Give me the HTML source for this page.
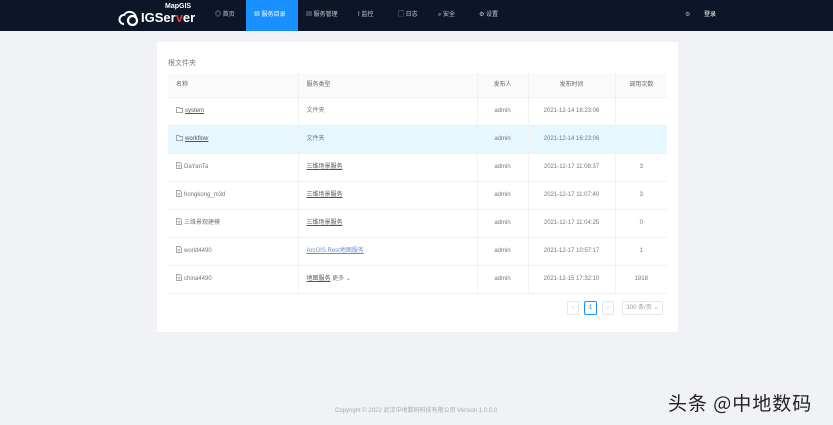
<!DOCTYPE html>
<html><head><meta charset="utf-8"><style>
*{margin:0;padding:0;box-sizing:border-box}
body{width:833px;height:425px;background:#f0f2f5;font-family:"Liberation Sans","Noto Sans CJK SC",sans-serif;position:relative;overflow:hidden;color:#666;font-size:6px}
.nav{position:absolute;left:0;top:0;width:833px;height:31px;background:#0c1628}
.logo{position:absolute;left:118px;top:0;width:90px;height:31px;color:#fff}
.logo .big{position:absolute;left:23px;top:10px;font-size:13px;font-weight:bold;line-height:16px}
.logo .small{position:absolute;left:47px;top:2px;font-size:7px;font-weight:bold;line-height:9px}
.ni{position:absolute;top:0;height:31px;line-height:31px;color:#c8ccd4;font-size:6px}
.act{background:#1890ff;color:#fff;padding:0 8px}
.card{position:absolute;left:157px;top:42px;width:521px;height:290px;background:#fff}
.title{position:absolute;left:11px;top:16px;font-size:7px;color:#777}
table{position:absolute;left:11px;top:31px;width:499px;border-collapse:collapse;table-layout:fixed}
td,th{height:28px;line-height:10px;vertical-align:middle;border-bottom:1px solid #eef0f2;font-weight:normal;font-size:6px;color:#777;text-align:left;padding:0 0 0 8px;white-space:nowrap}
th{height:24px;background:#fafafa;color:#666}
td+td,th+th{border-left:1px solid #f2f2f2}
.c{text-align:center;padding-left:0}
tr.hl td{background:#e6f7ff}
u{color:#555}
svg.i{vertical-align:-1px;margin-right:2px}
.foot{position:absolute;left:335px;top:405px;font-size:6px;color:#aaa}
.wm{position:absolute;left:668px;top:389px;font-size:19px;letter-spacing:1px;color:#222;font-family:"Noto Sans CJK SC",sans-serif}
.pg{position:absolute;top:259px;height:14px;border:1px solid #e5e5e5;border-radius:2px;font-size:6px;text-align:center;line-height:12px;color:#bbb;background:#fff}
</style></head><body>
<div class="nav">
 <div class="logo">
  <svg width="22" height="18" viewBox="0 0 22 18" style="position:absolute;left:0;top:9px"><path d="M6 15a4.5 4.5 0 0 1 0-9a6.5 6.5 0 0 1 12 2.5" fill="none" stroke="#fff" stroke-width="2"/><circle cx="14.5" cy="11.5" r="4.5" fill="none" stroke="#fff" stroke-width="2.2"/></svg>
  <span class="small">MapGIS</span><span class="big">IGSer<span style="color:#e03a3a">v</span>er</span>
 </div>
 <div class="ni" style="left:215px">◎ 首页</div>
 <div class="ni act" style="left:246px;width:52px">▦ 服务目录</div>
 <div class="ni" style="left:306px">▤ 服务管理</div>
 <div class="ni" style="left:358px">ⅼ 监控</div>
 <div class="ni" style="left:398px">▢ 日志</div>
 <div class="ni" style="left:438px">⌕ 安全</div>
 <div class="ni" style="left:479px">⚙ 设置</div>
 <div class="ni" style="left:685px;color:#aab">⚙</div>
 <div class="ni" style="left:704px;color:#fff">登录</div>
</div>
<div class="card">
 <div class="title">根文件夹</div>
 <table>
  <colgroup><col style="width:130px"><col style="width:179px"><col style="width:51px"><col style="width:87px"><col></colgroup>
  <tr><th>名称</th><th>服务类型</th><th class="c">发布人</th><th class="c">发布时间</th><th class="c">调用次数</th></tr>
  <tr><td><svg class="i" width="7" height="6" viewBox="0 0 7 6"><path d="M.5 .5h2.5l.7 1h2.8v4h-6z" fill="none" stroke="#888" stroke-width=".7"/></svg><u>system</u></td><td>文件夹</td><td class="c">admin</td><td class="c">2021-12-14 16:23:06</td><td></td></tr>
  <tr class="hl"><td><svg class="i" width="7" height="6" viewBox="0 0 7 6"><path d="M.5 .5h2.5l.7 1h2.8v4h-6z" fill="none" stroke="#888" stroke-width=".7"/></svg><u>workflow</u></td><td>文件夹</td><td class="c">admin</td><td class="c">2021-12-14 16:23:06</td><td></td></tr>
  <tr><td><svg class="i" width="6" height="7" viewBox="0 0 6 7"><path d="M.5 .5h3.5l1.5 1.5v4.5h-5zM1.8 3.3h2.4M1.8 4.8h2.4" fill="none" stroke="#888" stroke-width=".7"/></svg>DaYanTa</td><td><u>三维场景服务</u></td><td class="c">admin</td><td class="c">2021-12-17 11:08:37</td><td class="c">3</td></tr>
  <tr><td><svg class="i" width="6" height="7" viewBox="0 0 6 7"><path d="M.5 .5h3.5l1.5 1.5v4.5h-5zM1.8 3.3h2.4M1.8 4.8h2.4" fill="none" stroke="#888" stroke-width=".7"/></svg>hongkong_m3d</td><td><u>三维场景服务</u></td><td class="c">admin</td><td class="c">2021-12-17 11:07:40</td><td class="c">3</td></tr>
  <tr><td><svg class="i" width="6" height="7" viewBox="0 0 6 7"><path d="M.5 .5h3.5l1.5 1.5v4.5h-5zM1.8 3.3h2.4M1.8 4.8h2.4" fill="none" stroke="#888" stroke-width=".7"/></svg>三维景观建模</td><td><u>三维场景服务</u></td><td class="c">admin</td><td class="c">2021-12-17 11:04:25</td><td class="c">0</td></tr>
  <tr><td><svg class="i" width="6" height="7" viewBox="0 0 6 7"><path d="M.5 .5h3.5l1.5 1.5v4.5h-5zM1.8 3.3h2.4M1.8 4.8h2.4" fill="none" stroke="#888" stroke-width=".7"/></svg>world4490</td><td><u style="color:#6a8fbf">ArcGIS Rest地图服务</u></td><td class="c">admin</td><td class="c">2021-12-17 10:57:17</td><td class="c">1</td></tr>
  <tr><td><svg class="i" width="6" height="7" viewBox="0 0 6 7"><path d="M.5 .5h3.5l1.5 1.5v4.5h-5zM1.8 3.3h2.4M1.8 4.8h2.4" fill="none" stroke="#888" stroke-width=".7"/></svg>china4490</td><td><u>地图服务</u> 更多 ⌄</td><td class="c">admin</td><td class="c">2021-12-15 17:32:10</td><td class="c">1918</td></tr>
 </table>
 <div class="pg" style="left:410px;width:12px">‹</div>
 <div class="pg" style="left:427px;width:13px;border-color:#1890ff;color:#1890ff">1</div>
 <div class="pg" style="left:445px;width:12px">›</div>
 <div class="pg" style="left:465px;width:41px;color:#999">100 条/页 ⌄</div>
</div>
<div class="foot">Copyright © 2022 武汉中地数码科技有限公司 Version 1.0.0.0</div>
<div class="wm">头条 @中地数码</div>
</body></html>
